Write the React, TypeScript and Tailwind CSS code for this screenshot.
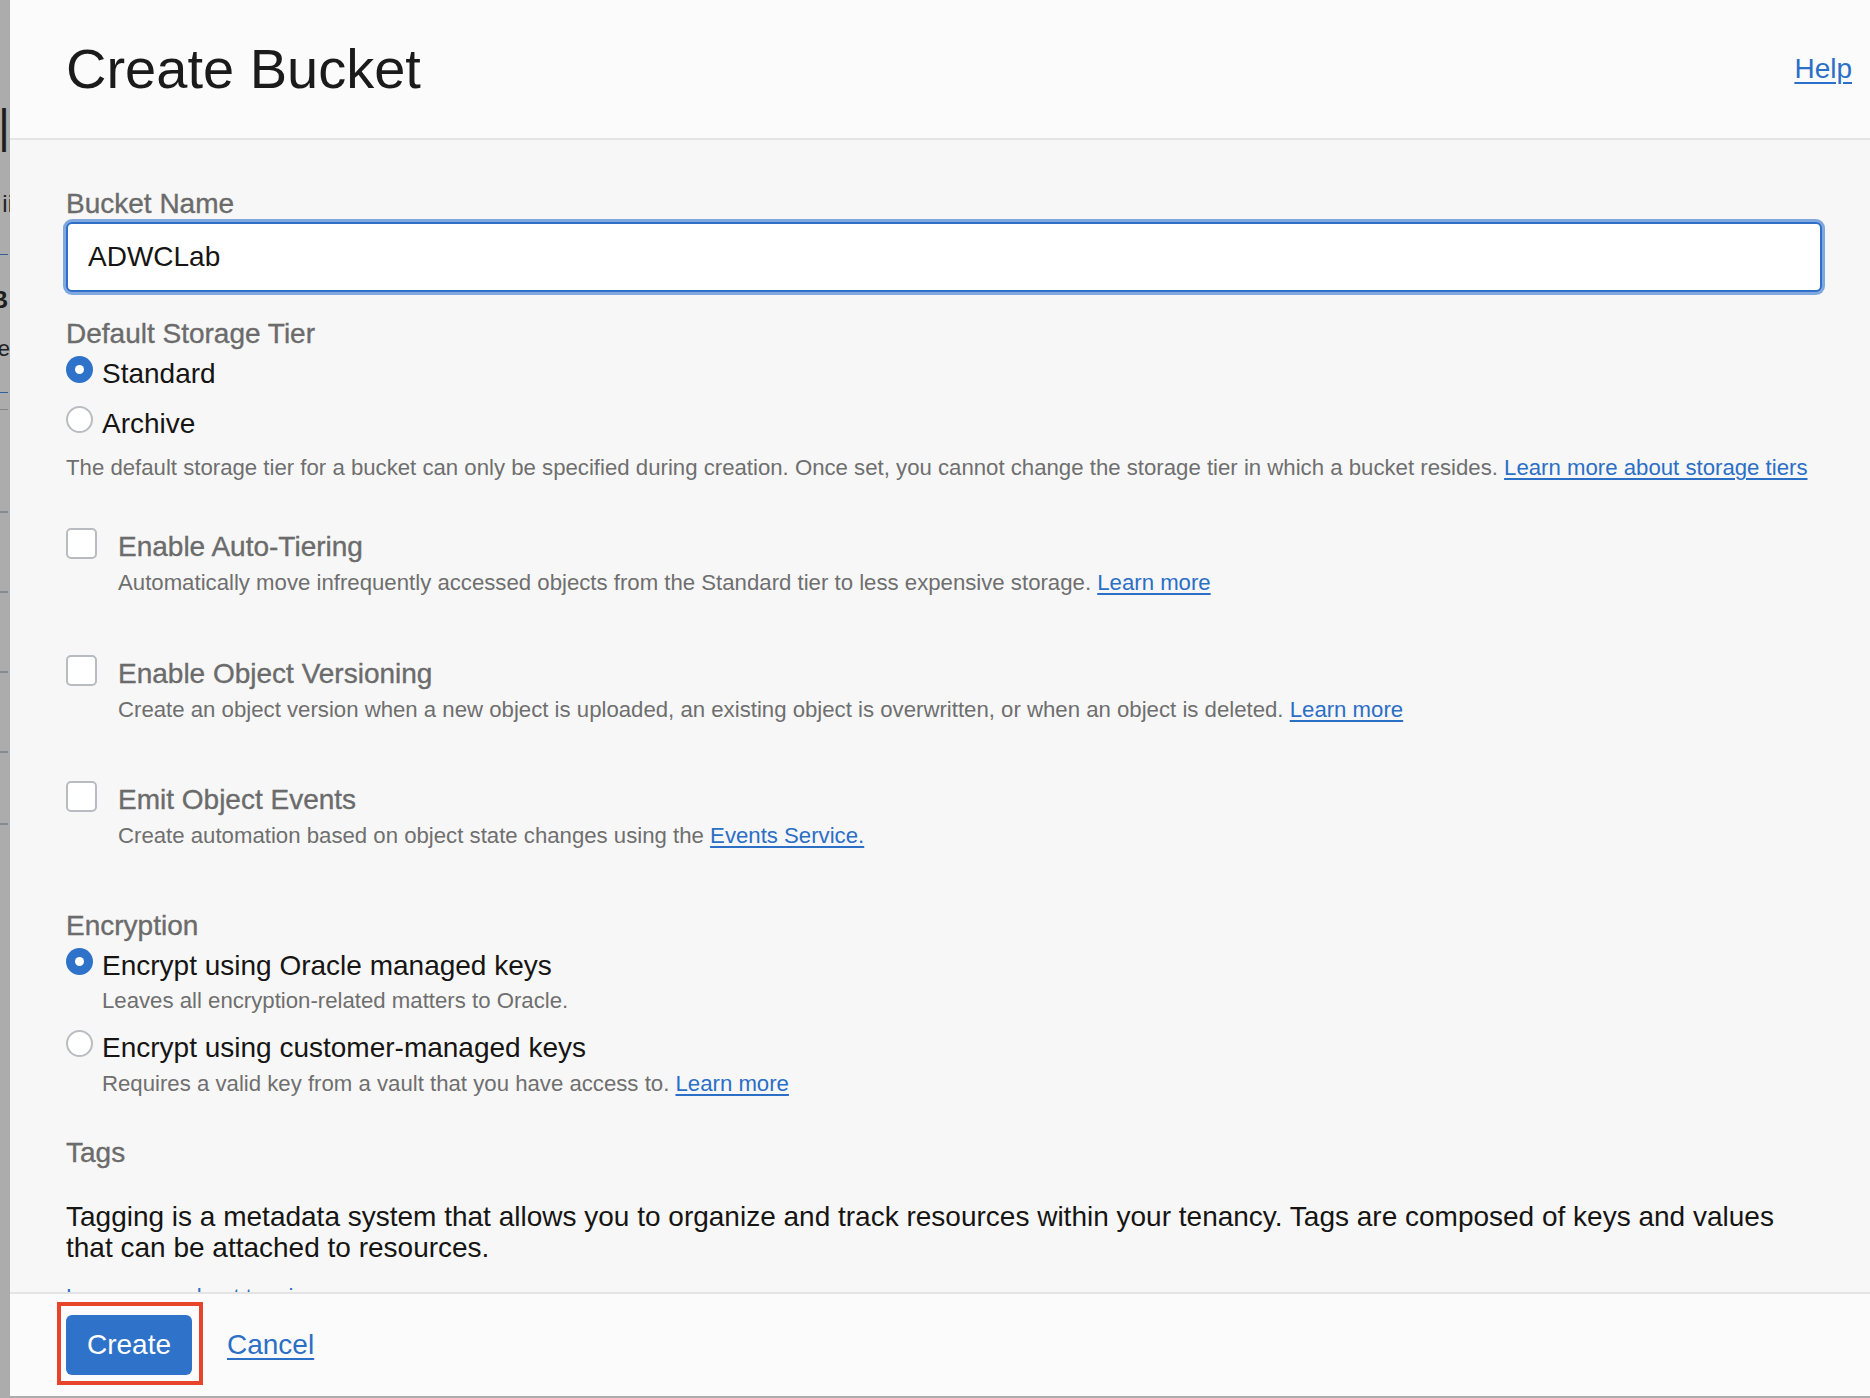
import React from "react";

const FONT = { fontFamily: '"Liberation Sans", Arial, Helvetica, sans-serif' };

function Radio({ checked }: { checked: boolean }) {
  return checked ? (
    <span className="-mt-[2px] flex h-[27px] w-[27px] shrink-0 items-center justify-center rounded-full bg-[#2f72c9]">
      <span className="h-[9px] w-[9px] rounded-full bg-white" />
    </span>
  ) : (
    <span className="-mt-[2px] h-[27px] w-[27px] shrink-0 rounded-full border-2 border-[#b9bcc1] bg-white" />
  );
}

function Link({ children, size = "22" }: { children: React.ReactNode; size?: "22" | "28" }) {
  return (
    <a
      className={
        size === "28"
          ? "cursor-pointer text-[28px] text-[#2b6fc6] underline decoration-[2px] underline-offset-[4px]"
          : "cursor-pointer text-[#2b6fc6] underline decoration-[1.5px] underline-offset-[3px]"
      }
    >
      {children}
    </a>
  );
}

function CheckGroup({
  label,
  desc,
  link,
  className,
}: {
  label: string;
  desc: string;
  link: string;
  className: string;
}) {
  return (
    <div className={"flex gap-[21px] " + className}>
      <span className="h-[31px] w-[31px] shrink-0 rounded-[5px] border-2 border-[#b8bbc0] bg-white" />
      <div className="flex flex-col pt-[3px]">
        <div className="text-[28px] leading-[32px] text-[#6b6b6b] [-webkit-text-stroke:0.35px_#6b6b6b]">{label}</div>
        <div className="mt-[7px] text-[22.2px] leading-[26px] text-[#6f6f6f]">
          {desc} <Link>{link}</Link>
        </div>
      </div>
    </div>
  );
}

export default function App() {
  return (
    <div className="flex h-[1398px] w-[1870px] bg-[#acacac]" style={FONT}>
      {/* background page peeking at the left */}
      <div className="relative h-[1396px] w-[10px] shrink-0 overflow-hidden bg-[#acacac]">
        <span className="absolute right-[0px] top-[96px] text-[46px] leading-[60px] text-[#1d1d1d]">T|</span>
        <span className="absolute right-[-3px] top-[190px] text-[24px] leading-[28px] text-[#222]">ii</span>
        <div className="absolute left-0 top-[254px] h-[1px] w-[8px] bg-[#2d5fa3]" />
        <span className="absolute right-[2px] top-[286px] text-[24px] font-bold leading-[28px] text-[#1d1d1d]">B</span>
        <span className="absolute right-[0px] top-[336px] text-[22px] leading-[26px] text-[#222]">e</span>
        <div className="absolute left-0 top-[392px] h-[1px] w-[8px] bg-[#2d5fa3]" />
        <div className="absolute left-0 top-[409px] h-[1px] w-[8px] bg-[#858585]" />
        <div className="absolute left-0 top-[511px] h-[2px] w-[8px] bg-[#858990]" />
        <div className="absolute left-0 top-[591px] h-[2px] w-[8px] bg-[#858990]" />
        <div className="absolute left-0 top-[671px] h-[2px] w-[8px] bg-[#858990]" />
        <div className="absolute left-0 top-[751px] h-[2px] w-[8px] bg-[#858990]" />
        <div className="absolute left-0 top-[823px] h-[2px] w-[8px] bg-[#858990]" />
      </div>

      <div className="flex h-[1396px] flex-1 flex-col">
        {/* Header */}
        <div className="flex h-[140px] shrink-0 items-center justify-between border-b-2 border-[#e4e4e4] bg-[#fbfbfb] pl-[56px] pr-[18px]">
          <h1 className="text-[56px] leading-[64px] text-[#1b1b1b]">Create Bucket</h1>
          <Link size="28">Help</Link>
        </div>

        {/* Body */}
        <div className="min-h-0 flex-1 overflow-hidden bg-[#f7f7f7] pl-[56px] pr-[48px] pt-[48px]">
          <div className="text-[28px] leading-[32px] text-[#6b6b6b] [-webkit-text-stroke:0.35px_#6b6b6b]">Bucket Name</div>
          <div className="mt-[2px] flex h-[70px] items-center rounded-[6px] border-2 border-[#2f6fc8] bg-white px-[20px] ring-[3px] ring-[#80a8de]">
            <span className="text-[28px] text-[#161513]">ADWCLab</span>
          </div>

          <div className="mt-[26px] text-[28px] leading-[32px] text-[#6b6b6b] [-webkit-text-stroke:0.35px_#6b6b6b]">
            Default Storage Tier
          </div>
          <div className="mt-[8px] flex items-start gap-[9px] text-[28px] leading-[32px] text-[#161513]">
            <Radio checked />
            <span>Standard</span>
          </div>
          <div className="mt-[18px] flex items-start gap-[9px] text-[28px] leading-[32px] text-[#161513]">
            <Radio checked={false} />
            <span>Archive</span>
          </div>
          <div className="mt-[15px] text-[22.2px] leading-[26px] text-[#6f6f6f]">
            The default storage tier for a bucket can only be specified during creation. Once set, you cannot change the
            storage tier in which a bucket resides. <Link>Learn more about storage tiers</Link>
          </div>

          <CheckGroup
            className="mt-[47px]"
            label="Enable Auto-Tiering"
            desc="Automatically move infrequently accessed objects from the Standard tier to less expensive storage."
            link="Learn more"
          />
          <CheckGroup
            className="mt-[59px]"
            label="Enable Object Versioning"
            desc="Create an object version when a new object is uploaded, an existing object is overwritten, or when an object is deleted."
            link="Learn more"
          />
          <CheckGroup
            className="mt-[58px]"
            label="Emit Object Events"
            desc="Create automation based on object state changes using the"
            link="Events Service."
          />

          <div className="mt-[61px] text-[28px] leading-[32px] text-[#6b6b6b] [-webkit-text-stroke:0.35px_#6b6b6b]">Encryption</div>
          <div className="mt-[8px] flex items-start gap-[9px] text-[28px] leading-[32px] text-[#161513]">
            <Radio checked />
            <span>Encrypt using Oracle managed keys</span>
          </div>
          <div className="mt-[6px] pl-[36px] text-[22.2px] leading-[26px] text-[#6f6f6f]">
            Leaves all encryption-related matters to Oracle.
          </div>
          <div className="mt-[18px] flex items-start gap-[9px] text-[28px] leading-[32px] text-[#161513]">
            <Radio checked={false} />
            <span>Encrypt using customer-managed keys</span>
          </div>
          <div className="mt-[7px] pl-[36px] text-[22.2px] leading-[26px] text-[#6f6f6f]">
            Requires a valid key from a vault that you have access to. <Link>Learn more</Link>
          </div>

          <div className="mt-[40px] text-[28px] leading-[32px] text-[#6b6b6b] [-webkit-text-stroke:0.35px_#6b6b6b]">Tags</div>
          <p className="mt-[32px] text-[28px] leading-[31px] text-[#161513]">
            Tagging is a metadata system that allows you to organize and track resources within your tenancy. Tags are
            composed of keys and values that can be attached to resources.
          </p>
          <div className="mt-[21px] text-[22px] leading-[26px]">
            <Link>Learn more about tagging</Link>
          </div>
        </div>

        {/* Footer */}
        <div className="flex h-[104px] shrink-0 items-center gap-[35px] border-t-2 border-[#e4e4e4] bg-[#fbfbfb] pl-[56px]">
          <div className="relative">
            <button className="flex h-[60px] w-[126px] items-center justify-center rounded-[6px] bg-[#2f72c9] text-[28px] text-white">
              Create
            </button>
            <div className="pointer-events-none absolute -bottom-[10px] -left-[9px] -right-[11px] -top-[13px] border-4 border-[#e8442b]" />
          </div>
          <Link size="28">Cancel</Link>
        </div>
      </div>
    </div>
  );
}
